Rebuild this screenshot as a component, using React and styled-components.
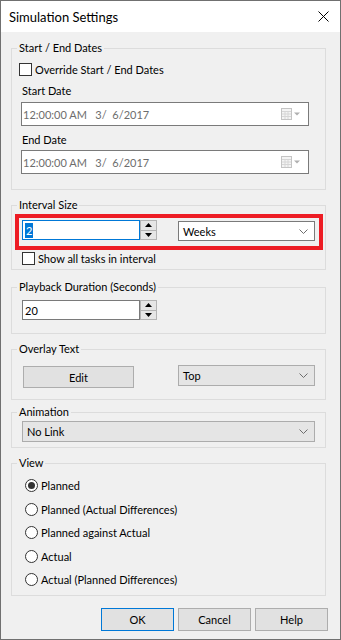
import React from "react";
import styled, { createGlobalStyle } from "styled-components";

const GlobalStyle = createGlobalStyle`
  * { box-sizing: border-box; }
  body {
    margin: 0;
    font-family: Lato, "Noto Sans", sans-serif;
    font-size: 11px;
    color: #000;
  }
`;

const Window = styled.div`
  width: 341px;
  height: 640px;
  border: 1px solid #707070;
  background: #f0f0f0;
  display: flex;
  flex-direction: column;
`;

const TitleBar = styled.div`
  height: 31px;
  flex: none;
  background: #fff;
  display: flex;
  align-items: center;
  justify-content: space-between;
  padding: 0 10px 0 8px;
`;

const Title = styled.span`
  font-size: 13px;
  line-height: 18px;
  color: #000;
`;

const Close = styled.button`
  border: none;
  background: none;
  padding: 0;
  width: 14px;
  height: 14px;
  display: flex;
  align-items: center;
  justify-content: center;
`;

const Body = styled.div`
  flex: 1;
  padding: 16px 14px 0 10px;
  display: flex;
  flex-direction: column;
`;

const Group = styled.div`
  position: relative;
  border: 1px solid #dcdcdc;
  margin-top: ${(p) => p.$top || 0}px;
  padding: ${(p) => p.$pad};
  display: flex;
  flex-direction: column;
`;

const Legend = styled.span`
  position: absolute;
  top: -9px;
  left: 5px;
  padding: 0 2px;
  background: #f0f0f0;
  line-height: 16px;
`;

const CheckRow = styled.label`
  display: flex;
  align-items: center;
  gap: 3px;
  height: 13px;
  margin-left: ${(p) => p.$indent || 0}px;
  margin-top: ${(p) => p.$top || 0}px;
  line-height: 16px;
`;

const Box = styled.span`
  width: 13px;
  height: 13px;
  flex: none;
  background: #fff;
  border: 1px solid #333;
`;

const FieldLabel = styled.div`
  margin: ${(p) => p.$top}px 0 0 3px;
  line-height: 15px;
`;

const DateBox = styled.div`
  margin: ${(p) => p.$top}px 0 0 2px;
  height: 24px;
  background: #fff;
  border: 1px solid #7a7a7a;
  display: flex;
  align-items: center;
  padding: 0 7px 0 1px;
  color: #6d6d6d;
  white-space: pre;
`;

const DateText = styled.span`
  flex: 1;
`;

const Highlight = styled.div`
  margin: 0 -14px 0 -4px;
  border: 4px solid #ed1c24;
  padding: 2px 4px 5px 3px;
  display: flex;
  justify-content: space-between;
  align-items: flex-start;
`;

const Spin = styled.div`
  display: flex;
  margin-left: ${(p) => p.$indent || 0}px;
  width: 135px;
`;

const SpinInput = styled.div`
  flex: 1;
  height: 20px;
  background: #fff;
  border: 1px solid ${(p) => (p.$focused ? "#0078d7" : "#7a7a7a")};
  display: flex;
  align-items: center;
  padding-left: 2px;
`;

const Selected = styled.span`
  background: #0078d7;
  color: #fff;
  padding: 0 1px;
  line-height: 15px;
`;

const SpinButtons = styled.div`
  width: 17px;
  height: 20px;
  border: 1px solid #b4b4b4;
  background: #e6e6e6;
  display: flex;
  flex-direction: column;
`;

const SpinHalf = styled.span`
  flex: 1;
  display: flex;
  align-items: center;
  justify-content: center;
  & + & {
    border-top: 1px solid #b4b4b4;
  }
`;

const Combo = styled.div`
  width: ${(p) => (p.$width ? `${p.$width}px` : "auto")};
  height: ${(p) => p.$height || 20}px;
  margin-top: ${(p) => p.$shift || 0}px;
  background: ${(p) => (p.$editable ? "#fff" : "#e5e5e5")};
  border: 1px solid ${(p) => (p.$editable ? "#7a7a7a" : "#acacac")};
  display: flex;
  align-items: center;
  justify-content: space-between;
  padding: 0 6px 0 4px;
`;

const Row = styled.div`
  display: flex;
  justify-content: space-between;
  align-items: flex-start;
`;

const PushButton = styled.button`
  font: inherit;
  color: #000;
  width: ${(p) => p.$width}px;
  height: ${(p) => p.$height || 23}px;
  margin-left: ${(p) => p.$indent || 0}px;
  background: #e1e1e1;
  border: 1px solid ${(p) => (p.$default ? "#0078d7" : "#adadad")};
  padding: 0;
`;

const RadioRow = styled.label`
  display: flex;
  align-items: center;
  gap: 3px;
  height: 23.5px;
`;

const Radio = styled.span`
  width: 13px;
  height: 13px;
  flex: none;
  border-radius: 50%;
  border: 1px solid #333;
  background: #fff;
  display: flex;
  align-items: center;
  justify-content: center;
  &::after {
    content: "";
    width: 7px;
    height: 7px;
    border-radius: 50%;
    background: ${(p) => (p.$checked ? "#333" : "transparent")};
  }
`;

const Footer = styled.div`
  margin: 12px -2px 0 0;
  display: flex;
  justify-content: flex-end;
  gap: 4px;
`;

const Chevron = () => (
  <svg width="9" height="5" viewBox="0 0 9 5">
    <path d="M0.5 0.5 L4.5 4.5 L8.5 0.5" fill="none" stroke="#6d6d6d" strokeWidth="1" />
  </svg>
);

const Arrow = ({ up }) => (
  <svg width="7" height="4" viewBox="0 0 7 4">
    <path d={up ? "M0 4 L3.5 0 L7 4 Z" : "M0 0 L3.5 4 L7 0 Z"} fill="#000" />
  </svg>
);

const CalendarIcon = () => (
  <svg width="20" height="12" viewBox="0 0 20 12">
    <rect x="0.5" y="0.5" width="10" height="11" fill="#f4f4f4" stroke="#c4c4c4" />
    <path d="M1 3.5 H10 M1 6 H10 M1 8.5 H10 M4 3 V11 M7 3 V11" stroke="#d6d6d6" />
    <path d="M13 4.5 L19 4.5 L16 7.5 Z" fill="#b0b0b0" />
  </svg>
);

const SpinBox = ({ value, focused, indent }) => (
  <Spin $indent={indent}>
    <SpinInput $focused={focused}>
      {focused ? <Selected>{value}</Selected> : value}
    </SpinInput>
    <SpinButtons>
      <SpinHalf>
        <Arrow up />
      </SpinHalf>
      <SpinHalf>
        <Arrow />
      </SpinHalf>
    </SpinButtons>
  </Spin>
);

const views = [
  "Planned",
  "Planned (Actual Differences)",
  "Planned against Actual",
  "Actual",
  "Actual (Planned Differences)",
];

const dateValue = "12:00:00 AM   3/  6/2017";

export default function App() {
  return (
    <>
      <GlobalStyle />
      <Window>
        <TitleBar>
          <Title>Simulation Settings</Title>
          <Close aria-label="Close">
            <svg width="11" height="11" viewBox="0 0 11 11">
              <path d="M0.5 0.5 L10.5 10.5 M10.5 0.5 L0.5 10.5" stroke="#000" strokeWidth="1" />
            </svg>
          </Close>
        </TitleBar>
        <Body>
          <Group $pad="14px 16px 15px 7px">
            <Legend>Start / End Dates</Legend>
            <CheckRow>
              <Box />
              Override Start / End Dates
            </CheckRow>
            <FieldLabel $top={7}>Start Date</FieldLabel>
            <DateBox $top={4}>
              <DateText>{dateValue}</DateText>
              <CalendarIcon />
            </DateBox>
            <FieldLabel $top={6}>End Date</FieldLabel>
            <DateBox $top={3}>
              <DateText>{dateValue}</DateText>
              <CalendarIcon />
            </DateBox>
          </Group>

          <Group $top={15} $pad="8px 16px 4px 7px">
            <Legend>Interval Size</Legend>
            <Highlight>
              <SpinBox value="2" focused />
              <Combo $width={137} $shift={1} $editable>
                Weeks
                <Chevron />
              </Combo>
            </Highlight>
            <CheckRow $indent={3} $top={2}>
              <Box />
              Show all tasks in interval
            </CheckRow>
          </Group>

          <Group $top={17} $pad="12px 16px 13px 7px">
            <Legend>Playback Duration (Seconds)</Legend>
            <SpinBox value="20" indent={3} />
          </Group>

          <Group $top={15} $pad="16px 10px 11px 7px">
            <Legend>Overlay Text</Legend>
            <Row>
              <PushButton $width={111} $height={22} $indent={4}>
                Edit
              </PushButton>
              <Combo $width={137} $height={21} $shift={-1}>
                Top
                <Chevron />
              </Combo>
            </Row>
          </Group>

          <Group $top={12} $pad="8px 10px 5px 10px">
            <Legend>Animation</Legend>
            <Combo $height={21}>
              No Link
              <Chevron />
            </Combo>
          </Group>

          <Group $top={15} $pad="10px 10px 3.5px 13px">
            <Legend>View</Legend>
            {views.map((v, i) => (
              <RadioRow key={v}>
                <Radio $checked={i === 0} />
                {v}
              </RadioRow>
            ))}
          </Group>

          <Footer>
            <PushButton $width={73} $default>
              OK
            </PushButton>
            <PushButton $width={73}>Cancel</PushButton>
            <PushButton $width={73}>Help</PushButton>
          </Footer>
        </Body>
      </Window>
    </>
  );
}
